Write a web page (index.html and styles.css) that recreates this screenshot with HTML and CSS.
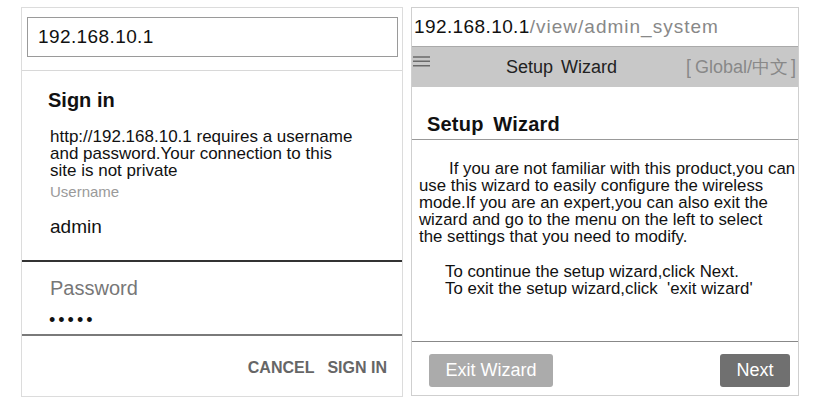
FILE: index.html
```html
<!DOCTYPE html>
<html lang="en">
<head>
    <meta charset="UTF-8">
    <title>Sign in / Setup Wizard</title>
    <link rel="stylesheet" href="styles.css">
</head>
<body>
    <div class="panel login">
        <div class="addr-wrap">
            <div class="addr-input">192.168.10.1</div>
        </div>
        <div class="signin">
            <h2>Sign in</h2>
            <p class="note">http://192.168.10.1 requires a username<br>and password.Your connection to this<br>site is not private</p>
            <div class="label">Username</div>
            <div class="value">admin</div>
        </div>
        <div class="pass">
            <div class="pass-label">Password</div>
            <div class="dots">&bull;&bull;&bull;&bull;&bull;</div>
        </div>
        <div class="actions">
            <span>CANCEL</span>
            <span>SIGN IN</span>
        </div>
    </div>

    <div class="panel wizard">
        <div class="url"><span class="host">192.168.10.1</span><span class="path">/view/admin_system</span></div>
        <div class="topbar">
            <svg class="menu" width="17" height="11" viewBox="0 0 17 11">
                <path d="M0 1h17M0 5.3h17M0 9.8h17" stroke="#6a6a6a" stroke-width="1.6"/>
            </svg>
            <span class="title">Setup Wizard</span>
            <span class="lang"><span class="brk open">[</span>Global/中文<span class="brk close">]</span></span>
        </div>
        <div class="content">
            <h2>Setup Wizard</h2>
            <p class="intro">If you are not familiar with this product,you can<br>use this wizard to easily configure the wireless<br>mode.If you are an expert,you can also exit the<br>wizard and go to the menu on the left to select<br>the settings that you need to modify.</p>
            <p class="hint">To continue the setup wizard,click Next.<br>To exit the setup wizard,click &nbsp;'exit wizard'</p>
        </div>
        <div class="buttons">
            <button class="exit">Exit Wizard</button>
            <button class="next">Next</button>
        </div>
    </div>
</body>
</html>
```

FILE: styles.css
```css
body {
    margin: 0;
    padding: 7px 0 0 21px;
    display: flex;
    gap: 8px;
    align-items: flex-start;
    font-family: "Liberation Sans", Arial, sans-serif;
    color: #111;
    background: #fff;
}
.panel {
    border: 1px solid #dcdcdc;
    box-sizing: border-box;
}

/* left: sign in dialog */
.login {
    width: 382px;
    height: 390px;
}
.addr-wrap {
    padding: 9px 4px 13px 5px;
    border-bottom: 1px solid #d8d8d8;
}
.addr-input {
    height: 40px;
    box-sizing: border-box;
    border: 1px solid #9a9a9a;
    padding: 0 10px;
    font-size: 19px;
    letter-spacing: 0.4px;
    line-height: 38px;
}
.signin {
    padding: 17px 10px 22px 28px;
    border-bottom: 2px solid #333;
}
.signin h2 {
    margin: 0 0 16px -2px;
    font-size: 20px;
    line-height: 24px;
}
.note {
    margin: 0;
    font-size: 17px;
    line-height: 17px;
}
.label {
    margin-top: 4px;
    font-size: 15px;
    line-height: 18px;
    color: #9a9a9a;
}
.value {
    margin-top: 15px;
    font-size: 19px;
    line-height: 22px;
}
.pass {
    padding: 14px 20px 4px 28px;
    border-bottom: 2px solid #7a7a7a;
}
.pass-label {
    font-size: 20px;
    line-height: 24px;
    color: #777;
}
.dots {
    margin: 10px 0 0 -1px;
    font-size: 18px;
    line-height: 20px;
    letter-spacing: 3px;
}
.actions {
    display: flex;
    justify-content: flex-end;
    gap: 13px;
    padding: 22px 15px 0 0;
    font-size: 16px;
    line-height: 20px;
    font-weight: bold;
    color: #666;
}

/* right: setup wizard */
.wizard {
    width: 388px;
    height: 389px;
    border-color: #cfcfcf;
    display: flex;
    flex-direction: column;
}
.url {
    height: 38px;
    border-bottom: 1px solid #aaa;
    padding-left: 2px;
    font-size: 19px;
    line-height: 38px;
    letter-spacing: 0.4px;
}
.path {
    color: #888;
    letter-spacing: 1px;
}
.topbar {
    height: 40px;
    background: #c8c8c8;
    display: flex;
    align-items: center;
    padding: 0 0 0 1px;
}
.menu {
    align-self: flex-start;
    margin-top: 9px;
}
.title {
    margin-left: 76px;
    font-size: 18px;
    word-spacing: 3px;
    color: #222;
}
.lang {
    margin-left: auto;
    padding-right: 2px;
    font-size: 18px;
    color: #888;
}
.brk {
    font-weight: 300;
    transform: scaleY(1.15);
    display: inline-block;
}
.brk.open {
    margin-right: 4px;
}
.brk.close {
    margin-left: 3px;
}
.content {
    flex: 1;
    border-bottom: 1px solid #888;
}
.content h2 {
    margin: 0;
    padding: 25px 0 3px 15px;
    font-size: 20px;
    line-height: 24px;
    word-spacing: 4px;
    letter-spacing: 0.2px;
    border-bottom: 1px solid #999;
}
.intro {
    margin: 20px 0 0;
    padding-left: 7px;
    text-indent: 30px;
    font-size: 16.8px;
    line-height: 17px;
}
.hint {
    margin: 18px 0 0;
    padding-left: 33px;
    font-size: 16.8px;
    line-height: 17px;
}
.buttons {
    display: flex;
    justify-content: space-between;
    padding: 12px 8px 8px 17px;
}
.buttons button {
    height: 33px;
    border: none;
    border-radius: 3px;
    color: #fff;
    font-family: "Liberation Sans", Arial, sans-serif;
    font-size: 18px;
}
.exit {
    width: 124px;
    background: #ababab;
}
.next {
    width: 70px;
    background: #707070;
}
```
